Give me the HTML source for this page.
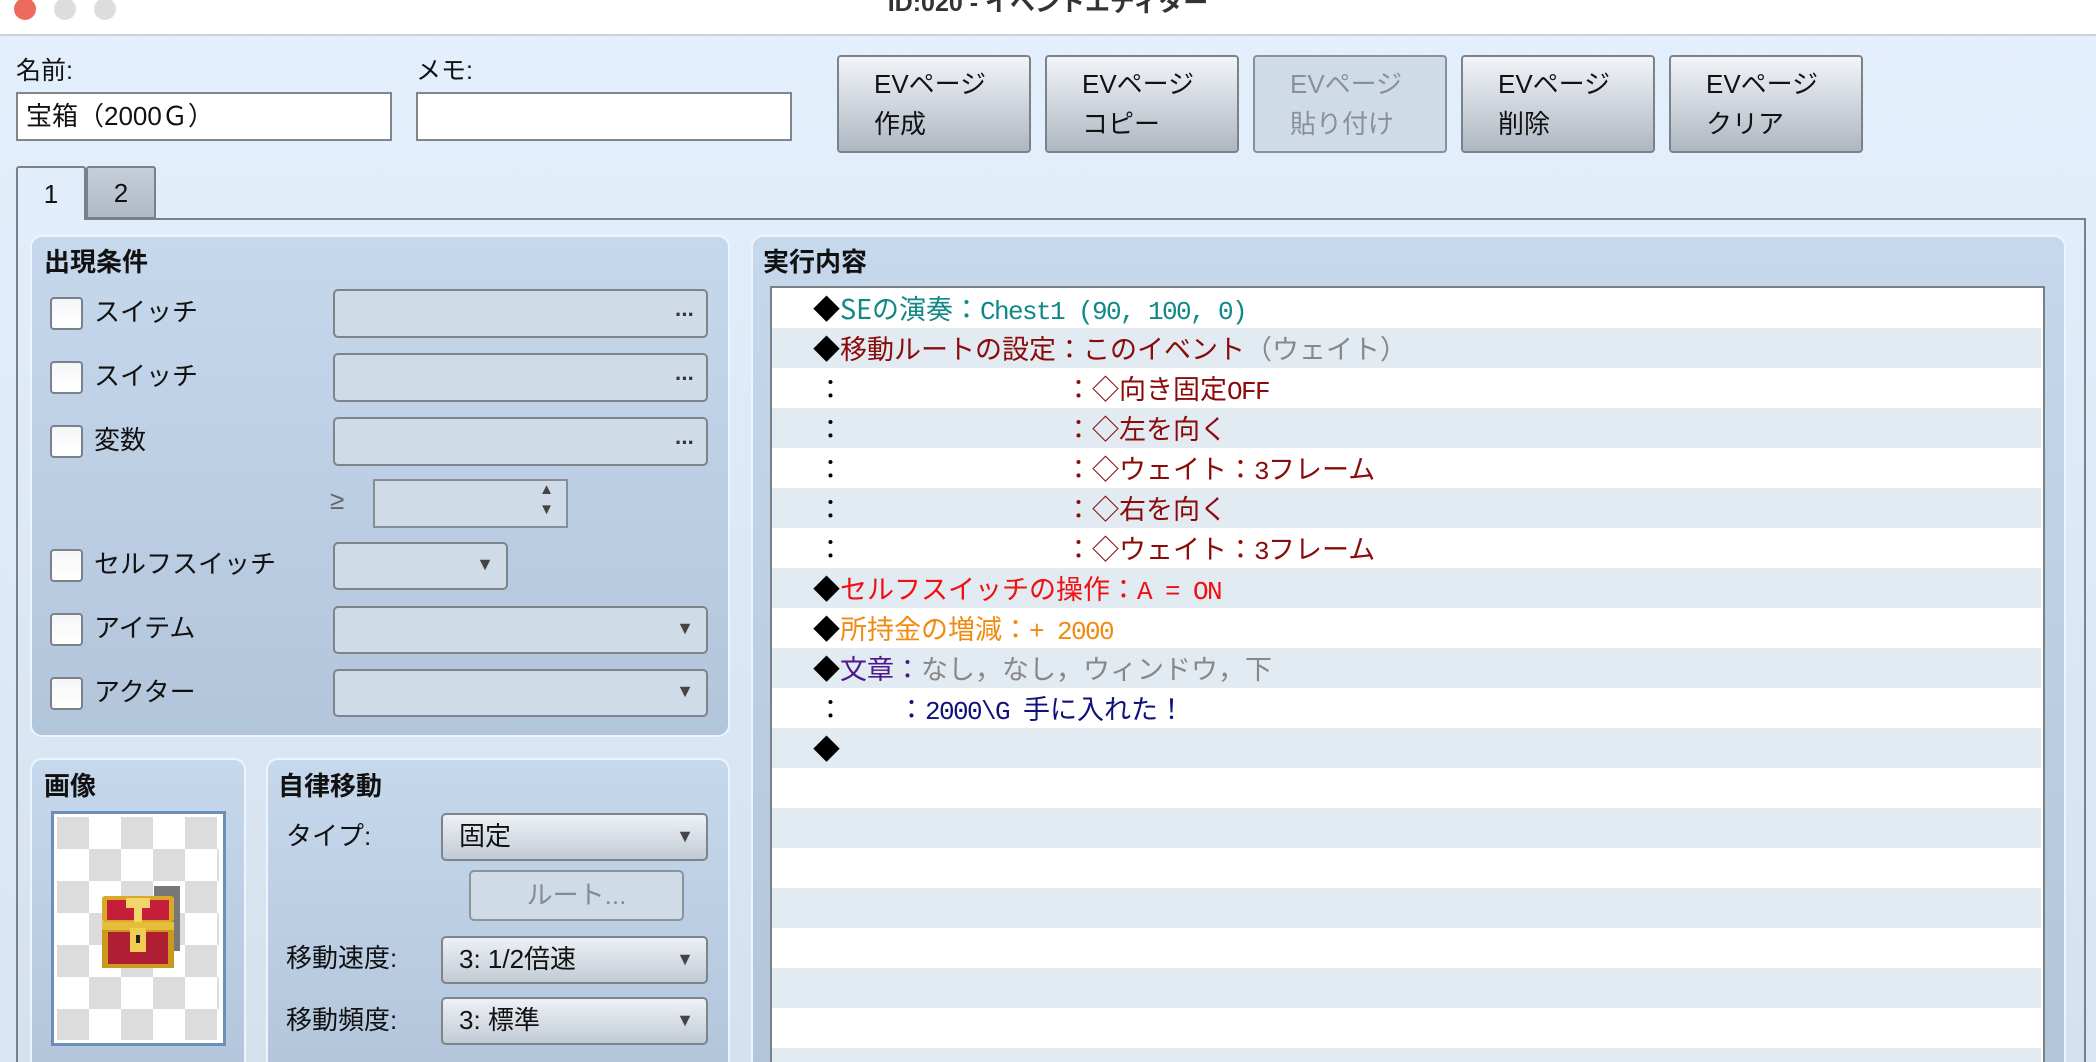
<!DOCTYPE html>
<html><head><meta charset="utf-8">
<style>
*{box-sizing:border-box;margin:0;padding:0}
html,body{width:2096px;height:1062px;overflow:hidden}
body{position:relative;background:linear-gradient(#e4effc,#d8e5f3);font-family:"Liberation Sans","Noto Sans CJK JP",sans-serif;color:#111}
.a{position:absolute}
.title{left:0;top:0;width:2096px;height:36px;background:#fff;border-bottom:2px solid #c8d3de}
.dot{position:absolute;top:-2px;width:22px;height:22px;border-radius:50%}
.lbl{font-size:25px;line-height:30px}
.inp{background:#fff;border:2px solid #80868e;font-size:26px;line-height:44px;padding-left:8px}
.btn{border:2px solid #7c828b;border-radius:4px;background:linear-gradient(#f1f4f7,#c9d0d8 60%,#aeb6c0);font-size:26px;line-height:40px;padding:7px 0 0 35px;color:#111}
.btn.dis{background:#cfdbe6;color:#8a9098;border-color:#8a9099}
.grp{border:2px solid #eef4fb;border-radius:12px;background:linear-gradient(#c6d8ec,#b2c5db)}
.gt{font-size:26px;font-weight:bold;line-height:30px}
.cb{width:33px;height:33px;background:linear-gradient(#f4f6f8,#fff);border:2px solid #7b8189;border-radius:4px}
.fld{border:2px solid #7e848b;border-radius:5px;background:#cfdbe6}
.fld .d{position:absolute;right:12px;top:11px;font-size:22px;color:#333;font-weight:bold;letter-spacing:-1px}
.tri{position:absolute;right:12px;font-size:18px;color:#444}
.cmb{border:2px solid #7e848b;border-radius:5px;background:linear-gradient(#edf1f5,#c2cbd5);font-size:26px;line-height:43px;padding-left:16px}
.row{position:absolute;left:0;width:1269px;height:40px;font-family:"Noto Sans CJK JP",sans-serif;font-size:27px;line-height:40px;white-space:nowrap}
.row>span{position:absolute;top:0}
.m{font-family:"Liberation Mono",monospace;font-size:26px;letter-spacing:-1.6px}
.sh{background:#e2eaf2}
</style></head><body>
<div class="a title">
 <div class="dot" style="left:14px;background:#ec6a5e"></div>
 <div class="dot" style="left:54px;background:#ddd"></div>
 <div class="dot" style="left:94px;background:#ddd"></div>
 <div class="a" style="left:0;width:2096px;top:-12px;text-align:center;font-size:25px;font-weight:bold;color:#333;line-height:30px">ID:020 - イベントエディター</div>
</div>

<div class="a lbl" style="left:16px;top:56px">名前:</div>
<div class="a inp" style="left:16px;top:92px;width:376px;height:49px">宝箱（2000Ｇ）</div>
<div class="a lbl" style="left:416px;top:56px">メモ:</div>
<div class="a inp" style="left:416px;top:92px;width:376px;height:49px"></div>

<div class="a btn" style="left:837px;top:55px;width:194px;height:98px">EVページ<br>作成</div>
<div class="a btn" style="left:1045px;top:55px;width:194px;height:98px">EVページ<br>コピー</div>
<div class="a btn dis" style="left:1253px;top:55px;width:194px;height:98px">EVページ<br>貼り付け</div>
<div class="a btn" style="left:1461px;top:55px;width:194px;height:98px">EVページ<br>削除</div>
<div class="a btn" style="left:1669px;top:55px;width:194px;height:98px">EVページ<br>クリア</div>

<div class="a" style="left:16px;top:218px;width:2070px;height:844px;border:2px solid #7a8088;border-bottom:none;background:linear-gradient(#e1edfa,#d4e1ef)"></div>
<div class="a" style="left:16px;top:166px;width:70px;height:54px;border:2px solid #7a8088;border-bottom:none;background:#e1edfa;border-radius:3px 3px 0 0;font-size:26px;text-align:center;line-height:52px">1</div>
<div class="a" style="left:86px;top:166px;width:70px;height:53px;border:2px solid #7a8088;background:linear-gradient(#c6ced8,#b0bac6);border-radius:3px 3px 0 0;font-size:26px;text-align:center;line-height:50px">2</div>

<div class="a grp" style="left:30px;top:235px;width:700px;height:502px"></div>
<div class="a gt" style="left:44px;top:247px">出現条件</div>
<div class="a cb" style="left:50px;top:297px"></div><div class="a lbl" style="left:94px;top:297px;font-size:26px">スイッチ</div>
<div class="a fld" style="left:333px;top:289px;width:375px;height:49px"><span class="d">···</span></div>
<div class="a cb" style="left:50px;top:361px"></div><div class="a lbl" style="left:94px;top:361px;font-size:26px">スイッチ</div>
<div class="a fld" style="left:333px;top:353px;width:375px;height:49px"><span class="d">···</span></div>
<div class="a cb" style="left:50px;top:425px"></div><div class="a lbl" style="left:94px;top:425px;font-size:26px">変数</div>
<div class="a fld" style="left:333px;top:417px;width:375px;height:49px"><span class="d">···</span></div>
<div class="a" style="left:330px;top:485px;font-size:26px;color:#666">≥</div>
<div class="a" style="left:373px;top:479px;width:195px;height:49px;border:2px solid #888e95;background:#cfdbe6"><span class="tri" style="top:0;font-size:15px">▲</span><span class="tri" style="top:20px;font-size:15px">▼</span></div>
<div class="a cb" style="left:50px;top:549px"></div><div class="a lbl" style="left:94px;top:549px;font-size:26px">セルフスイッチ</div>
<div class="a fld" style="left:333px;top:542px;width:175px;height:48px"><span class="tri" style="top:10px">▼</span></div>
<div class="a cb" style="left:50px;top:613px"></div><div class="a lbl" style="left:94px;top:613px;font-size:26px">アイテム</div>
<div class="a fld" style="left:333px;top:606px;width:375px;height:48px"><span class="tri" style="top:10px">▼</span></div>
<div class="a cb" style="left:50px;top:677px"></div><div class="a lbl" style="left:94px;top:677px;font-size:26px">アクター</div>
<div class="a fld" style="left:333px;top:669px;width:375px;height:48px"><span class="tri" style="top:10px">▼</span></div>

<div class="a grp" style="left:30px;top:758px;width:216px;height:320px"></div>
<div class="a gt" style="left:44px;top:771px">画像</div>
<div class="a" style="left:51px;top:811px;width:175px;height:235px;border:3px solid #6a8fbb;background:#fff">
 <svg width="169" height="229" style="position:absolute;left:0;top:0">
  <defs><pattern id="ck" width="64" height="64" patternUnits="userSpaceOnUse" x="3" y="3"><rect width="64" height="64" fill="#fff"/><rect width="32" height="32" fill="#dcdcdc"/><rect x="32" y="32" width="32" height="32" fill="#dcdcdc"/></pattern></defs>
  <rect x="3" y="3" width="162" height="223" fill="url(#ck)"/>
  <rect x="100" y="72" width="26" height="65" fill="#777"/>
  <rect x="48" y="82" width="72" height="26" rx="3" fill="#d8a826"/>
  <rect x="53" y="86" width="62" height="20" fill="#c41e3a"/>
  <rect x="72" y="84" width="24" height="10" fill="#f3d66a"/>
  <rect x="80" y="94" width="8" height="14" fill="#f3d66a"/>
  <rect x="48" y="108" width="72" height="46" fill="#c99a1e"/>
  <rect x="54" y="118" width="60" height="32" fill="#b01e34"/>
  <rect x="48" y="108" width="72" height="8" fill="#e6bd3a"/>
  <rect x="76" y="114" width="16" height="24" fill="#f0cd50"/>
  <rect x="82" y="121" width="4" height="8" fill="#222"/>
 </svg>
</div>

<div class="a grp" style="left:266px;top:758px;width:464px;height:320px"></div>
<div class="a gt" style="left:278px;top:771px">自律移動</div>
<div class="a lbl" style="left:286px;top:821px;font-size:26px">タイプ:</div>
<div class="a cmb" style="left:441px;top:813px;width:267px;height:48px">固定<span class="tri" style="top:0">▼</span></div>
<div class="a" style="left:469px;top:870px;width:215px;height:51px;border:2px solid #8d939a;border-radius:5px;background:#cfdbe6;color:#858b92;font-size:26px;text-align:center;line-height:46px">ルート...</div>
<div class="a lbl" style="left:286px;top:943px;font-size:26px">移動速度:</div>
<div class="a cmb" style="left:441px;top:936px;width:267px;height:48px">3: 1/2倍速<span class="tri" style="top:0">▼</span></div>
<div class="a lbl" style="left:286px;top:1005px;font-size:26px">移動頻度:</div>
<div class="a cmb" style="left:441px;top:997px;width:267px;height:48px">3: 標準<span class="tri" style="top:0">▼</span></div>

<div class="a grp" style="left:751px;top:235px;width:1315px;height:840px"></div>
<div class="a gt" style="left:763px;top:247px">実行内容</div>
<div class="a" style="left:770px;top:286px;width:1275px;height:776px;border:2px solid #7a8088;border-bottom:none;background:#fff;overflow:hidden">
 <div class="row" style="top:0;color:#108888"><span style="left:41px;color:#000">◆</span><span style="left:68px">SEの演奏：<span class="m">Chest1 (90, 100, 0)</span></span></div>
 <div class="row sh" style="top:40px;color:#8b0a0a"><span style="left:41px;color:#000">◆</span><span style="left:68px">移動ルートの設定：このイベント<span style="color:#888">（ウェイト）</span></span></div>
 <div class="row" style="top:80px;color:#8b0a0a"><span style="left:45px;color:#000">：</span><span style="left:293px">：◇向き固定<span class="m">OFF</span></span></div>
 <div class="row sh" style="top:120px;color:#8b0a0a"><span style="left:45px;color:#000">：</span><span style="left:293px">：◇左を向く</span></div>
 <div class="row" style="top:160px;color:#8b0a0a"><span style="left:45px;color:#000">：</span><span style="left:293px">：◇ウェイト：<span class="m">3</span>フレーム</span></div>
 <div class="row sh" style="top:200px;color:#8b0a0a"><span style="left:45px;color:#000">：</span><span style="left:293px">：◇右を向く</span></div>
 <div class="row" style="top:240px;color:#8b0a0a"><span style="left:45px;color:#000">：</span><span style="left:293px">：◇ウェイト：<span class="m">3</span>フレーム</span></div>
 <div class="row sh" style="top:280px;color:#f01010"><span style="left:41px;color:#000">◆</span><span style="left:68px">セルフスイッチの操作：<span class="m">A = ON</span></span></div>
 <div class="row" style="top:320px;color:#f08a10"><span style="left:41px;color:#000">◆</span><span style="left:68px">所持金の増減：<span class="m">+ 2000</span></span></div>
 <div class="row sh" style="top:360px;color:#4a1a8a"><span style="left:41px;color:#000">◆</span><span style="left:68px">文章：<span style="color:#888">なし，なし，ウィンドウ，下</span></span></div>
 <div class="row" style="top:400px;color:#10107a"><span style="left:45px;color:#000">：</span><span style="left:126px">：<span class="m">2000\G </span>手に入れた！</span></div>
 <div class="row sh" style="top:440px"><span style="left:41px;color:#000">◆</span></div>
 <div class="row" style="top:480px"></div>
 <div class="row sh" style="top:520px"></div>
 <div class="row" style="top:560px"></div>
 <div class="row sh" style="top:600px"></div>
 <div class="row" style="top:640px"></div>
 <div class="row sh" style="top:680px"></div>
 <div class="row" style="top:720px"></div>
 <div class="row sh" style="top:760px"></div>
</div>
</body></html>
